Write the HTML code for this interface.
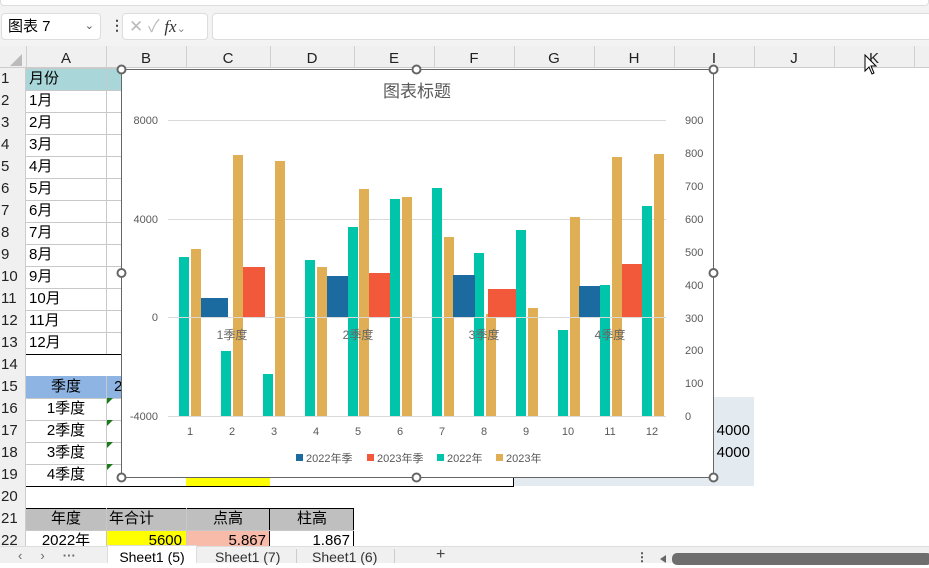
<!DOCTYPE html>
<html><head><meta charset="utf-8"><style>
*{margin:0;padding:0;box-sizing:border-box}
body{width:929px;height:563px;overflow:hidden;background:#fff;font-family:"Liberation Sans","Noto Sans CJK SC",sans-serif;position:relative}
.a{position:absolute}
.c{position:absolute;font-size:15px;line-height:22px;color:#000;white-space:nowrap}
</style></head><body>
<div class="a" style="left:0;top:0;width:929px;height:46px;background:#f3f3f3"></div>
<div class="a" style="left:0;top:-4px;width:929px;height:10px;background:#fff;border:1px solid #ddd;border-radius:4px"></div>
<div class="a" style="left:1px;top:13px;width:100px;height:27px;background:#fff;border:1px solid #ddd;border-radius:4px;font-size:15px;line-height:25px;padding-left:6px">图表 7<span style="position:absolute;right:6px;top:0;font-size:11px;color:#555">&#8964;</span></div>
<div class="a" style="left:110px;top:17px;font-size:14px;color:#444;font-weight:bold">&#8942;</div>
<div class="a" style="left:122px;top:13px;width:86px;height:27px;background:#fff;border:1px solid #ddd;border-radius:4px;font-size:17px;line-height:25px;color:#bbb;padding-left:6px">✕ ✓ <i style="font-family:'Liberation Serif',serif;color:#333">fx</i><span style="font-size:11px;color:#888">&#8964;</span></div>
<div class="a" style="left:212px;top:13px;width:720px;height:27px;background:#fff;border:1px solid #ddd;border-radius:4px"></div>
<div class="a" style="left:0;top:46px;width:929px;height:22px;background:#f0f0f0;border-bottom:1px solid #ccc"></div>
<svg class="a" style="left:0;top:46px" width="929" height="22">
<polygon points="22,8 22,20 10,20" fill="#bbb"/>
<g stroke="#d0d0d0"><line x1="26.5" y1="0" x2="26.5" y2="22"/><line x1="106.5" y1="0" x2="106.5" y2="22"/><line x1="186.5" y1="0" x2="186.5" y2="22"/><line x1="270.5" y1="0" x2="270.5" y2="22"/><line x1="354.5" y1="0" x2="354.5" y2="22"/><line x1="434.5" y1="0" x2="434.5" y2="22"/><line x1="514.5" y1="0" x2="514.5" y2="22"/><line x1="594.5" y1="0" x2="594.5" y2="22"/><line x1="674.5" y1="0" x2="674.5" y2="22"/><line x1="754.5" y1="0" x2="754.5" y2="22"/><line x1="834.5" y1="0" x2="834.5" y2="22"/><line x1="914.5" y1="0" x2="914.5" y2="22"/></g>
<g font-size="15" text-anchor="middle" fill="#222" font-family="Liberation Sans"><text x="66" y="17">A</text><text x="146" y="17">B</text><text x="228" y="17">C</text><text x="312" y="17">D</text><text x="394" y="17">E</text><text x="474" y="17">F</text><text x="554" y="17">G</text><text x="634" y="17">H</text><text x="714" y="17">I</text><text x="794" y="17">J</text><text x="874" y="17">K</text></g>
</svg>
<div class="a" style="left:0;top:68px;width:26px;height:480px;background:#f0f0f0;border-right:1px solid #ccc"></div>
<div class="a" style="left:0;top:68px;width:26px;font-size:15px;line-height:22px;color:#222;padding-left:1px">1<br>2<br>3<br>4<br>5<br>6<br>7<br>8<br>9<br>10<br>11<br>12<br>13<br>14<br>15<br>16<br>17<br>18<br>19<br>20<br>21<br>22</div>
<div class="a" style="left:26px;top:68px;width:95px;height:22px;background:#a9d6d8"></div>
<div class="a" style="left:26px;top:376px;width:95px;height:22px;background:#8db4e2"></div>
<div class="a" style="left:514px;top:397px;width:240px;height:89px;background:#e3ebf1"></div>
<div class="a" style="left:186px;top:476px;width:84px;height:10px;background:#ff0"></div>
<div class="a" style="left:26px;top:508px;width:328px;height:22px;background:#bfbfbf"></div>
<div class="a" style="left:106px;top:530px;width:80px;height:18px;background:#ff0"></div>
<div class="a" style="left:186px;top:530px;width:84px;height:18px;background:#f8bba9"></div>
<svg class="a" style="left:0;top:68px" width="929" height="480">
<g stroke="#c8c8c8">
<line x1="26" y1="22.5" x2="121" y2="22.5"/><line x1="26" y1="44.5" x2="121" y2="44.5"/><line x1="26" y1="66.5" x2="121" y2="66.5"/><line x1="26" y1="88.5" x2="121" y2="88.5"/><line x1="26" y1="110.5" x2="121" y2="110.5"/><line x1="26" y1="132.5" x2="121" y2="132.5"/><line x1="26" y1="154.5" x2="121" y2="154.5"/><line x1="26" y1="176.5" x2="121" y2="176.5"/><line x1="26" y1="198.5" x2="121" y2="198.5"/><line x1="26" y1="220.5" x2="121" y2="220.5"/><line x1="26" y1="242.5" x2="121" y2="242.5"/><line x1="26" y1="264.5" x2="121" y2="264.5"/>
<line x1="26" y1="330.5" x2="121" y2="330.5"/><line x1="26" y1="352.5" x2="121" y2="352.5"/><line x1="26" y1="374.5" x2="121" y2="374.5"/><line x1="26" y1="396.5" x2="121" y2="396.5"/>
<line x1="106.5" y1="0" x2="106.5" y2="286"/><line x1="106.5" y1="308" x2="106.5" y2="418"/>
<line x1="26" y1="0.5" x2="121" y2="0.5"/>
</g>
<g stroke="#000"><line x1="26" y1="286.5" x2="121" y2="286.5"/><line x1="26" y1="418.5" x2="514" y2="418.5"/><line x1="513.5" y1="408" x2="513.5" y2="418"/>
<line x1="26" y1="440.5" x2="354" y2="440.5"/><line x1="269.5" y1="440" x2="269.5" y2="480"/><line x1="353.5" y1="440" x2="353.5" y2="480"/></g>
<g stroke="#c8c8c8"><line x1="26" y1="462.5" x2="354" y2="462.5"/><line x1="106.5" y1="440" x2="106.5" y2="480"/><line x1="186.5" y1="440" x2="186.5" y2="480"/></g>
<g fill="#1a7a1a"><polygon points="107,330 113,330 107,336"/><polygon points="107,352 113,352 107,358"/><polygon points="107,374 113,374 107,380"/><polygon points="107,396 113,396 107,402"/></g>
</svg>
<div class="c" style="left:29px;top:68px">月份<br>1月<br>2月<br>3月<br>4月<br>5月<br>6月<br>7月<br>8月<br>9月<br>10月<br>11月<br>12月</div>
<div class="c" style="left:26px;top:376px;width:80px;text-align:center">季度<br>1季度<br>2季度<br>3季度<br>4季度</div>
<div class="c" style="left:114px;top:376px">2</div>
<div class="c" style="left:674px;top:420px;width:76px;text-align:right">4000<br>4000</div>
<div class="c" style="left:26px;top:508px;width:80px;text-align:center">年度</div>
<div class="c" style="left:109px;top:508px">年合计</div>
<div class="c" style="left:186px;top:508px;width:84px;text-align:center">点高</div>
<div class="c" style="left:270px;top:508px;width:84px;text-align:center">柱高</div>
<div class="c" style="left:26px;top:530px;width:80px;text-align:center">2022年</div>
<div class="c" style="left:106px;top:530px;width:76px;text-align:right">5600</div>
<div class="c" style="left:186px;top:530px;width:80px;text-align:right">5.867</div>
<div class="c" style="left:270px;top:530px;width:80px;text-align:right">1.867</div>
<svg class="a" style="left:0;top:0" width="929" height="563" font-family="Liberation Sans,Noto Sans CJK SC,sans-serif">
<rect x="121.5" y="69.5" width="592" height="408" fill="#fff" stroke="#666"/>
<text x="417" y="97" font-size="17" fill="#595959" text-anchor="middle">图表标题</text>
<g stroke="#d9d9d9"><line x1="168" y1="120.5" x2="666" y2="120.5"/><line x1="168" y1="219.5" x2="666" y2="219.5"/><line x1="168" y1="416.5" x2="666" y2="416.5"/></g>
<g font-size="11" fill="#595959" text-anchor="end"><text x="158" y="124">8000</text><text x="158" y="223">4000</text><text x="158" y="321">0</text><text x="158" y="420">-4000</text></g>
<g font-size="11" fill="#595959"><text x="685" y="124">900</text><text x="685" y="157">800</text><text x="685" y="190">700</text><text x="685" y="223">600</text><text x="685" y="256">500</text><text x="685" y="289">400</text><text x="685" y="322">300</text><text x="685" y="354">200</text><text x="685" y="387">100</text><text x="685" y="420">0</text></g>
<g fill="#00c5aa">
<rect x="179" y="257" width="10" height="159"/><rect x="221" y="351" width="10" height="65"/><rect x="263" y="374" width="10" height="42"/><rect x="305" y="260" width="10" height="156"/><rect x="348" y="227" width="10" height="189"/><rect x="390" y="199" width="10" height="217"/><rect x="432" y="188" width="10" height="228"/><rect x="474" y="253" width="10" height="163"/><rect x="516" y="230" width="10" height="186"/><rect x="558" y="330" width="10" height="86"/><rect x="600" y="285" width="10" height="131"/><rect x="642" y="206" width="10" height="210"/></g>
<g fill="#e0ae55">
<rect x="191" y="249" width="10" height="167"/><rect x="233" y="155" width="10" height="261"/><rect x="275" y="161" width="10" height="255"/><rect x="317" y="267" width="10" height="149"/><rect x="359" y="189" width="10" height="227"/><rect x="402" y="197" width="10" height="219"/><rect x="444" y="237" width="10" height="179"/><rect x="486" y="314" width="10" height="102"/><rect x="528" y="308" width="10" height="108"/><rect x="570" y="217" width="10" height="199"/><rect x="612" y="157" width="10" height="259"/><rect x="654" y="154" width="10" height="262"/></g>
<line x1="168" y1="317.5" x2="666" y2="317.5" stroke="#d9d9d9"/>
<g fill="#1b6aa0"><rect x="201" y="298" width="27" height="19"/><rect x="327" y="276" width="21" height="41"/><rect x="453" y="275" width="22" height="42"/><rect x="579" y="286" width="21" height="31"/></g>
<g fill="#f2593a"><rect x="243" y="267" width="22" height="50"/><rect x="369" y="273" width="21" height="44"/><rect x="488" y="289" width="28" height="28"/><rect x="622" y="264" width="20" height="53"/></g>
<g font-size="12" fill="#666" text-anchor="middle"><text x="232" y="339">1季度</text><text x="358" y="339">2季度</text><text x="484" y="339">3季度</text><text x="610" y="339">4季度</text></g>
<g font-size="11" fill="#595959" text-anchor="middle"><text x="190" y="435">1</text><text x="232" y="435">2</text><text x="274" y="435">3</text><text x="316" y="435">4</text><text x="358" y="435">5</text><text x="400" y="435">6</text><text x="442" y="435">7</text><text x="484" y="435">8</text><text x="526" y="435">9</text><text x="568" y="435">10</text><text x="610" y="435">11</text><text x="652" y="435">12</text></g>
<g font-size="11" fill="#595959"><rect x="296" y="454" width="7" height="7" fill="#1b6aa0"/><text x="306" y="462">2022年季</text><rect x="367" y="454" width="7" height="7" fill="#f2593a"/><text x="377" y="462">2023年季</text><rect x="437" y="454" width="7" height="7" fill="#00c5aa"/><text x="447" y="462">2022年</text><rect x="496" y="454" width="7" height="7" fill="#e0ae55"/><text x="506" y="462">2023年</text></g>
<g fill="#fff" stroke="#666" stroke-width="2"><circle cx="121.5" cy="69.5" r="4"/><circle cx="416.5" cy="69.5" r="4"/><circle cx="713.5" cy="69.5" r="4"/><circle cx="121.5" cy="273" r="4"/><circle cx="713.5" cy="273" r="4"/><circle cx="121.5" cy="477.5" r="4"/><circle cx="416.5" cy="477.5" r="4"/><circle cx="713.5" cy="477.5" r="4"/></g>
<path d="M865 55 L865 71 L869 67 L872 74 L874 73 L871 66 L876 66 Z" fill="#fff" stroke="#000" stroke-width="1"/>
</svg>
<div class="a" style="left:0;top:546px;width:929px;height:17px;background:#f0f0f0;border-top:1px solid #ddd"></div>
<div class="a" style="left:18px;top:548px;font-size:13px;color:#666">‹&nbsp;&nbsp;&nbsp;&nbsp;&nbsp;›&nbsp;&nbsp;&nbsp;&nbsp;&nbsp;<b>···</b></div>
<div class="a" style="left:107px;top:545px;width:90px;height:18px;background:#fff;border:1px solid #ddd;border-bottom:none;font-size:14px;line-height:22px;text-align:center">Sheet1 (5)</div>
<div class="a" style="left:215px;top:549px;font-size:14px;color:#333">Sheet1 (7)</div>
<div class="a" style="left:296px;top:549px;width:1px;height:14px;background:#ccc"></div>
<div class="a" style="left:312px;top:549px;font-size:14px;color:#333">Sheet1 (6)</div>
<div class="a" style="left:394px;top:549px;width:1px;height:14px;background:#ccc"></div>
<div class="a" style="left:436px;top:546px;font-size:16px;color:#444">+</div>
<div class="a" style="left:636px;top:550px;font-size:12px;color:#444;font-weight:bold">⋮</div>
<div class="a" style="left:660px;top:555px;width:0;height:0;border-top:4px solid transparent;border-bottom:4px solid transparent;border-right:6px solid #666"></div>
<div class="a" style="left:672px;top:553px;width:260px;height:12px;background:#6e6e6e;border-radius:5px"></div>
</body></html>
